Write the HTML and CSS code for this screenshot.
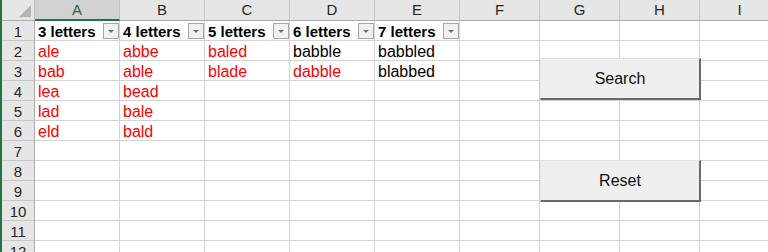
FILE: index.html
```html
<!DOCTYPE html>
<html>
<head>
<meta charset="utf-8">
<link rel="stylesheet" href="styles.css">
</head>
<body>
<div class="sheet">
  <div class="grid">
    <div class="corner"><span class="tri"></span></div>
    <div class="ch sel">A</div><div class="ch">B</div><div class="ch">C</div><div class="ch">D</div><div class="ch">E</div><div class="ch">F</div><div class="ch">G</div><div class="ch">H</div><div class="ch">I</div>

    <div class="rh">1</div>
    <div class="c hd">3 letters<span class="dd"></span></div>
    <div class="c hd">4 letters<span class="dd"></span></div>
    <div class="c hd">5 letters<span class="dd"></span></div>
    <div class="c hd">6 letters<span class="dd"></span></div>
    <div class="c hd">7 letters<span class="dd"></span></div>
    <div class="c"></div><div class="c"></div><div class="c"></div><div class="c"></div>

    <div class="rh">2</div>
    <div class="c red">ale</div><div class="c red">abbe</div><div class="c red">baled</div><div class="c">babble</div><div class="c">babbled</div>
    <div class="c"></div><div class="c"></div><div class="c"></div><div class="c"></div>

    <div class="rh">3</div>
    <div class="c red">bab</div><div class="c red">able</div><div class="c red">blade</div><div class="c red">dabble</div><div class="c">blabbed</div>
    <div class="c"></div><div class="c"></div><div class="c"></div><div class="c"></div>

    <div class="rh">4</div>
    <div class="c red">lea</div><div class="c red">bead</div><div class="c"></div><div class="c"></div><div class="c"></div>
    <div class="c"></div><div class="c"></div><div class="c"></div><div class="c"></div>

    <div class="rh">5</div>
    <div class="c red">lad</div><div class="c red">bale</div><div class="c"></div><div class="c"></div><div class="c"></div>
    <div class="c"></div><div class="c"></div><div class="c"></div><div class="c"></div>

    <div class="rh">6</div>
    <div class="c red">eld</div><div class="c red">bald</div><div class="c"></div><div class="c"></div><div class="c"></div>
    <div class="c"></div><div class="c"></div><div class="c"></div><div class="c"></div>

    <div class="rh">7</div>
    <div class="c"></div><div class="c"></div><div class="c"></div><div class="c"></div><div class="c"></div><div class="c"></div><div class="c"></div><div class="c"></div><div class="c"></div>
    <div class="rh">8</div>
    <div class="c"></div><div class="c"></div><div class="c"></div><div class="c"></div><div class="c"></div><div class="c"></div><div class="c"></div><div class="c"></div><div class="c"></div>
    <div class="rh">9</div>
    <div class="c"></div><div class="c"></div><div class="c"></div><div class="c"></div><div class="c"></div><div class="c"></div><div class="c"></div><div class="c"></div><div class="c"></div>
    <div class="rh">10</div>
    <div class="c"></div><div class="c"></div><div class="c"></div><div class="c"></div><div class="c"></div><div class="c"></div><div class="c"></div><div class="c"></div><div class="c"></div>
    <div class="rh">11</div>
    <div class="c"></div><div class="c"></div><div class="c"></div><div class="c"></div><div class="c"></div><div class="c"></div><div class="c"></div><div class="c"></div><div class="c"></div>
    <div class="rh">12</div>
    <div class="c"></div><div class="c"></div><div class="c"></div><div class="c"></div><div class="c"></div><div class="c"></div><div class="c"></div><div class="c"></div><div class="c"></div>
  </div>
  <div class="btn search">Search</div>
  <div class="btn reset">Reset</div>
</div>
</body>
</html>
```

FILE: styles.css
```css
html, body {
  margin: 0;
  padding: 0;
  background: #ffffff;
  overflow: hidden;
}
.sheet {
  position: relative;
  width: 768px;
  height: 252px;
  overflow: hidden;
  font-family: "Liberation Sans", Arial, sans-serif;
  font-size: 16px;
  color: #000;
}
.grid {
  display: grid;
  grid-template-columns: 33px 85px 85px 85px 85px 85px 80px 80px 80px 80px;
  grid-template-rows: 21px repeat(12, 20px);
  width: 780px;
  box-sizing: border-box;
  border-left: 2px solid #217346;
}
.corner {
  position: relative;
  background: #e6e6e6;
  border-right: 1px solid #c0c0c0;
  border-bottom: 1px solid #ababab;
}
.corner .tri {
  position: absolute;
  right: 3px;
  bottom: 3px;
  width: 0;
  height: 0;
  border-left: 12px solid transparent;
  border-bottom: 12px solid #b4b4b4;
}
.ch {
  background: #e6e6e6;
  border-right: 1px solid #c6c6c6;
  border-bottom: 1px solid #ababab;
  display: flex;
  align-items: center;
  justify-content: center;
  color: #262626;
  font-size: 15px;
  line-height: 20px;
}
.ch.sel {
  background: #d2d2d2;
  color: #1f6b3f;
  border-bottom: 2px solid #217346;
  border-right-color: #bcbcbc;
}
.rh {
  background: #e6e6e6;
  border-right: 1px solid #ababab;
  border-bottom: 1px solid #c6c6c6;
  display: flex;
  align-items: center;
  justify-content: center;
  color: #262626;
  font-size: 15px;
  line-height: 19px;
  padding-top: 1px;
}
.c {
  position: relative;
  border-right: 1px solid #d4d4d4;
  border-bottom: 1px solid #d4d4d4;
  padding: 1px 0 0 3px;
  line-height: 19px;
  font-size: 16px;
  white-space: nowrap;
  overflow: visible;
}
.c.red {
  color: #ff0000;
}
.c.hd {
  font-weight: bold;
  font-size: 15px;
  padding-top: 2px;
  line-height: 18px;
}
.dd {
  position: absolute;
  right: 0;
  top: 2px;
  width: 14px;
  height: 14px;
  background: #f0f0f0;
  border: 1px solid #a6a6a6;
  box-sizing: content-box;
}
.dd::after {
  content: "";
  position: absolute;
  left: 4px;
  top: 6px;
  border-left: 3px solid transparent;
  border-right: 3px solid transparent;
  border-top: 3px solid #707070;
}
.btn {
  position: absolute;
  left: 540px;
  width: 158px;
  height: 39px;
  box-sizing: content-box;
  background: #efefef;
  border-top: 1px solid #e2e2e2;
  border-left: 1px solid #e2e2e2;
  border-right: 2px solid #6a6a6a;
  border-bottom: 2px solid #6a6a6a;
  display: flex;
  align-items: center;
  justify-content: center;
  font-size: 16px;
  color: #111;
}
.search {
  top: 58px;
}
.reset {
  top: 160px;
}
```
